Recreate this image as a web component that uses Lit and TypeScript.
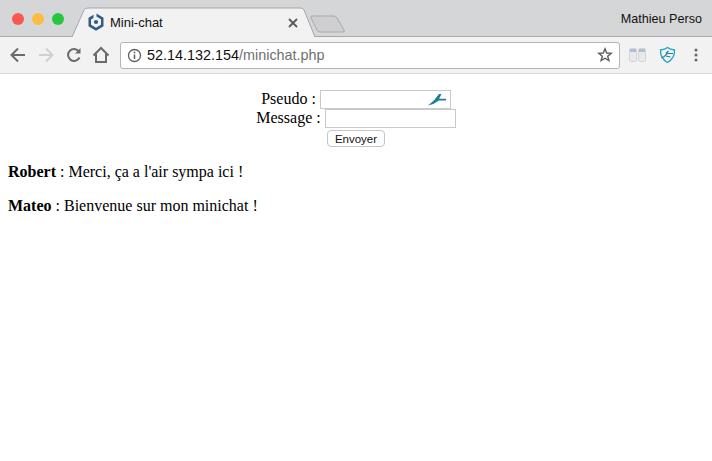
import { LitElement, html, css } from "lit";
import { customElement } from "lit/decorators.js";

@customElement("app-root")
export class AppRoot extends LitElement {
  static styles = css`
    :host { display: block; width: 712px; height: 461px; overflow: hidden; background: #fff; position: relative; }
    .titlebar { height: 36px; background: #d5d6d8; border-bottom: 1px solid #a9a9a9; display: flex; align-items: flex-start; position: relative; font-family: "Liberation Sans", Arial, sans-serif; }
    .lights { display: flex; gap: 8px; padding: 13px 0 0 12px; }
    .light { width: 12px; height: 12px; border-radius: 50%; }
    .red { background: #fc5753; } .yellow { background: #fdbc40; } .green { background: #27c840; }
    .tabshape { position: absolute; left: 64px; top: 7px; width: 290px; height: 31px; }
    .logo { position: absolute; left: 88px; top: 13px; width: 16px; height: 18px; }
    .tabtitle { position: absolute; left: 110px; top: 15px; font-size: 13px; line-height: 16px; color: #111; }
    .close { position: absolute; left: 287px; top: 17px; width: 12px; height: 12px; }
    .user { margin-left: auto; padding: 12px 10px 0 0; font-size: 12.6px; line-height: 15px; color: #111; }
    .toolbar { height: 36px; background: #f2f2f2; border-bottom: 1px solid #dcdcdc; display: flex; align-items: center; font-family: "Liberation Sans", Arial, sans-serif; box-sizing: content-box; }
    .nav { display: flex; align-items: center; gap: 8px; padding-left: 8px; width: 112px; box-sizing: border-box; flex: none; }
    .nav svg { width: 20px; height: 20px; flex: none; display: block; }
    .nav .home { margin-left: -1px; }
    .omni { width: 500px; height: 27px; box-sizing: border-box; flex: none; margin-left: 8px; background: #fff; border: 1px solid #b4b4b4; border-radius: 3px; display: flex; align-items: center; padding: 0 6px; }
    .omni .info { width: 15px; height: 15px; flex: none; margin-right: 5px; }
    .url { font-size: 14.4px; line-height: 18px; color: #111; white-space: nowrap; }
    .url span { color: #6f6f6f; }
    .star { width: 16px; height: 16px; margin-left: auto; flex: none; }
    .ext { display: flex; align-items: center; padding-left: 9px; gap: 10px; }
    .ext svg { display: block; flex: none; }
    .ext .shield { margin-left: 3px; }
    .ext .dots { margin-left: 8px; }
    .page { font-family: "Liberation Serif", "Times New Roman", serif; font-size: 16px; line-height: normal; color: #000; padding: 16px 8px 0; }
    form { margin: 0; text-align: center; }
    .line { height: 19px; display: flex; justify-content: center; align-items: flex-start; gap: 4px; }
    .label { line-height: 18px; }
    .field { width: 131px; height: 19px; box-sizing: border-box; border: 1px solid #c9c9c9; background: #fff; padding: 0; margin: 0; position: relative; display: block; }
    .bird { position: absolute; right: 4px; top: 2px; width: 18px; height: 13px; }
    .btnline { padding-top: 2px; height: 19px; box-sizing: border-box; }
    button { width: 58px; height: 17px; margin: 0; padding: 0; box-sizing: border-box; background: #fff; border: 1px solid #c6c6c6; border-radius: 4px; font-family: "Liberation Sans", Arial, sans-serif; font-size: 11.500px; line-height: 14px; color: #111; }
    p { margin: 16px 0; line-height: 18px; }
  `;

  render() {
    return html`
      <div class="titlebar">
        <div class="lights"><div class="light red"></div><div class="light yellow"></div><div class="light green"></div></div>
        <svg class="tabshape" viewBox="0 0 290 31">
          <path d="M8 30 L20 3 Q21 1 24 1 L236 1 Q239 1 240 3 L251 30 Z" fill="#f2f2f2"/>
          <path d="M8 30 L20 3 Q21 1 24 1 L236 1 Q239 1 240 3 L251 30" fill="none" stroke="#a6a6a6"/>
          <path d="M247 9.500 Q247.500 9 249 9 L270 9 Q272 9 273 11 L280 23 Q281 25 279 25 L256 25 Q254 25 253 23 L247 11 Q246.500 10 247 9.500 Z" fill="#cfcfd1" stroke="#a9a9a9"/>
        </svg>
        <svg class="logo" viewBox="0 0 16 18">
          <path d="M8.500 0.500 L15.500 4.700 L15.500 13.300 L8 17.700 L0.500 13.300 L0.500 4.700 L5.500 1.800 L5.500 5 L3 6.400 L3 11.800 L8 14.700 L13 11.800 L13 6.300 L8.500 3.600 Z" fill="#2f5d86"/>
          <circle cx="8" cy="9" r="2.100" fill="#2f5d86"/>
        </svg>
        <div class="tabtitle">Mini-chat</div>
        <svg class="close" viewBox="0 0 12 12"><path d="M2 2 L10 10 M10 2 L2 10" stroke="#5a5a5a" stroke-width="1.800"/></svg>
        <div class="user">Mathieu Perso</div>
      </div>
      <div class="toolbar">
        <div class="nav">
          <svg viewBox="0 0 20 20"><path d="M17 10 H4 M10 3.500 L3.500 10 L10 16.500" fill="none" stroke="#6a6a6a" stroke-width="2"/></svg>
          <svg viewBox="0 0 20 20"><path d="M3 10 H16 M10 3.500 L16.500 10 L10 16.500" fill="none" stroke="#d0d0d0" stroke-width="2"/></svg>
          <svg viewBox="0 0 20 20"><path d="M15.500 12.500 A6 6 0 1 1 15 6.500" fill="none" stroke="#6a6a6a" stroke-width="2"/><path d="M16.500 3 V8.500 H11 Z" fill="#6a6a6a"/></svg>
          <svg class="home" viewBox="0 0 20 20"><path d="M2.500 10.500 L10 3 L17.500 10.500 M5 9 V17 H15 V9" fill="none" stroke="#6a6a6a" stroke-width="2"/></svg>
        </div>
        <div class="omni">
          <svg class="info" viewBox="0 0 15 15"><circle cx="7.500" cy="7.500" r="6" fill="none" stroke="#5f5f5f" stroke-width="1.300"/><path d="M7.500 6.500 V11" stroke="#5f5f5f" stroke-width="1.500"/><circle cx="7.500" cy="4.500" r="0.900" fill="#5f5f5f"/></svg>
          <div class="url">52.14.132.154<span>/minichat.php</span></div>
          <svg class="star" viewBox="0 0 16 16"><path d="M8 1.800 L9.700 6 L14.200 6.300 L10.700 9.200 L11.900 13.600 L8 11.200 L4.100 13.600 L5.300 9.200 L1.800 6.300 L6.300 6 Z" fill="none" stroke="#5c5c5c" stroke-width="1.400"/></svg>
        </div>
        <div class="ext">
          <svg width="17" height="16" viewBox="0 0 17 16"><rect x="0.500" y="1.500" width="7" height="13" rx="1" fill="#e9e9ec" stroke="#d5d5d8"/><rect x="9.500" y="1.500" width="7" height="13" rx="1" fill="#e9e9ec" stroke="#d5d5d8"/><rect x="1" y="2" width="6" height="3" fill="#aebfd6"/><rect x="10" y="2" width="6" height="3" fill="#aebfd6"/></svg>
          <svg class="shield" width="17" height="18" viewBox="0 0 17 18"><path d="M1.500 4 Q6 3.500 8.500 1.500 Q11 3.500 15.500 4 Q16 12 8.500 16.500 Q1 12 1.500 4 Z" fill="none" stroke="#2aa5c0" stroke-width="1.400"/><path d="M2.500 12 Q6 10.500 8 7.500 L14 7.500 M7 7.500 L9.500 5 M7 10 L11.500 11" fill="none" stroke="#1f7f99" stroke-width="1.200"/></svg>
          <svg class="dots" width="4" height="16" viewBox="0 0 4 16"><circle cx="2" cy="3" r="1.500" fill="#666"/><circle cx="2" cy="8" r="1.500" fill="#666"/><circle cx="2" cy="13" r="1.500" fill="#666"/></svg>
        </div>
      </div>
      <div class="page">
        <form @submit=${(e: Event) => e.preventDefault()}>
          <div class="line"><span class="label">Pseudo :</span>
            <span class="field"><svg class="bird" viewBox="0 0 18 13"><path d="M0 12.500 Q4 9.500 7.500 5.800 L18 5.800 L18 7.400 L11 7.600 Q6 11.500 0 12.500 Z M7 6 L11 1 L13.500 1 L11 6 Z" fill="#1c7f98"/></svg></span>
          </div>
          <div class="line"><span class="label">Message :</span><span class="field"></span></div>
          <div class="line btnline"><button type="button">Envoyer</button></div>
        </form>
        <p><strong>Robert</strong> : Merci, ça a l'air sympa ici !</p>
        <p><strong>Mateo</strong> : Bienvenue sur mon minichat !</p>
      </div>
    `;
  }
}
